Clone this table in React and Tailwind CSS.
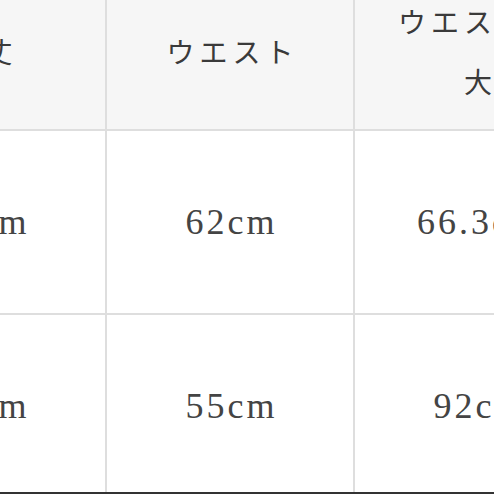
const header = [
  { label: ["総丈"] },
  { label: ["ウエスト"] },
  { label: ["ウエスト最", "大"] },
];

const rows = [
  ["90cm", "62cm", "66.3cm"],
  ["80cm", "55cm", "92cm"],
];

function Cell({ children, head }) {
  return (
    <div
      className={`flex items-center justify-center border-r-2 border-b-2 border-[#dedede] ${
        head ? "h-[159px] bg-[#f6f6f6]" : "h-[184px] bg-white"
      }`}
    >
      {children}
    </div>
  );
}

export default function App() {
  return (
    <div className="flex h-[494px] w-[494px] flex-col overflow-hidden bg-white">
      <div className="flex-1 overflow-hidden">
        <div className="-mt-[28px] -ml-[141px] grid w-[744px] grid-cols-[248px_248px_248px]">
          {header.map((h, i) => (
            <Cell key={i} head>
              <div className="pl-[5px] text-center font-['Noto_Sans_CJK_JP',sans-serif] text-[28px] leading-[60px] tracking-[5px] text-[#3a3a3a]">
                {h.label.map((l, j) => (
                  <div key={j}>{l}</div>
                ))}
              </div>
            </Cell>
          ))}
          {rows.map((r, i) =>
            r.map((v, j) => (
              <Cell key={`${i}-${j}`}>
                <span className="pl-[3px] font-['Liberation_Serif',serif] text-[36px] tracking-[3px] text-[#444]">
                  {v}
                </span>
              </Cell>
            ))
          )}
        </div>
      </div>
      <div className="h-[2px] bg-[#333]" />
    </div>
  );
}
